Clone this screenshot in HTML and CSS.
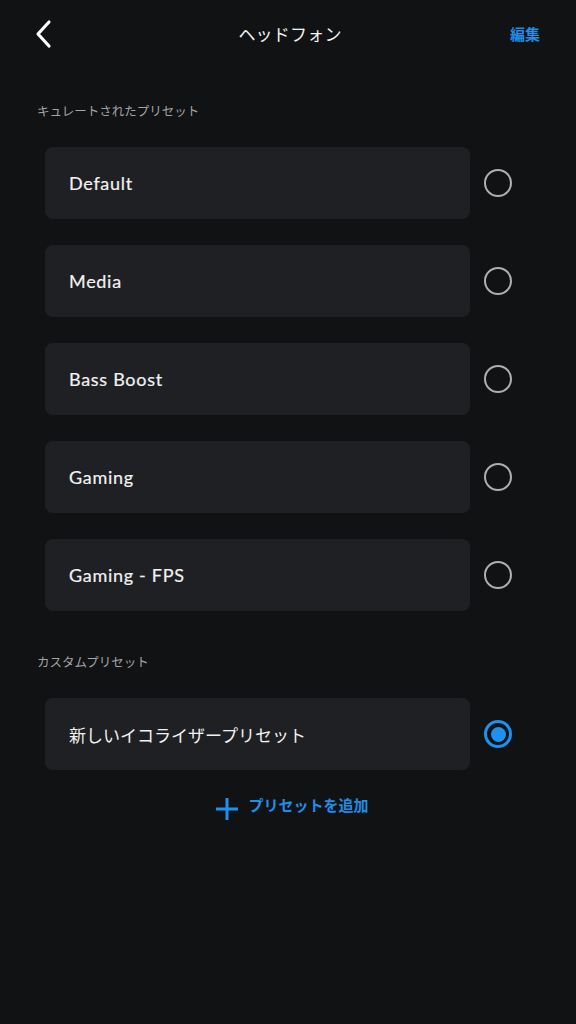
FILE: index.html
```html
<!DOCTYPE html>
<html lang="ja">
<head>
<meta charset="utf-8">
<link rel="stylesheet" href="styles.css">
</head>
<body>
<div class="screen">
  <header class="topbar">
    <button class="back" aria-label="戻る">
      <svg width="20" height="30" viewBox="0 0 20 30"><path d="M15 3 L4 15 L15 27" fill="none" stroke="#fff" stroke-width="3.2" stroke-linecap="round" stroke-linejoin="round"/></svg>
    </button>
    <h1 class="title">ヘッドフォン</h1>
    <a class="edit">編集</a>
  </header>

  <section class="group">
    <div class="group-label">キュレートされたプリセット</div>
    <ul class="list">
      <li class="row"><div class="card">Default</div><span class="radio"></span></li>
      <li class="row"><div class="card">Media</div><span class="radio"></span></li>
      <li class="row"><div class="card">Bass Boost</div><span class="radio"></span></li>
      <li class="row"><div class="card">Gaming</div><span class="radio"></span></li>
      <li class="row"><div class="card">Gaming - FPS</div><span class="radio"></span></li>
    </ul>
  </section>

  <section class="group custom">
    <div class="group-label">カスタムプリセット</div>
    <ul class="list">
      <li class="row"><div class="card jp">新しいイコライザープリセット</div><span class="radio selected"></span></li>
    </ul>
  </section>

  <div class="add">
    <svg class="plus" width="24" height="24" viewBox="0 0 24 24"><path d="M12 1 V23 M1 12 H23" stroke="#1e90f0" stroke-width="3" fill="none"/></svg>
    <span class="add-text">プリセットを追加</span>
  </div>
</div>
</body>
</html>
```

FILE: styles.css
```css
* { box-sizing: border-box; }
html, body {
  margin: 0;
  padding: 0;
  background: #111214;
}
body {
  font-family: "Lato", "Noto Sans CJK JP", sans-serif;
  color: #f2f2f2;
}
.screen {
  width: 576px;
  min-height: 1024px;
}
.topbar {
  height: 68px;
  display: grid;
  grid-template-columns: 1fr auto 1fr;
  align-items: center;
  padding: 0 36px 0 34px;
}
.back {
  background: none;
  border: 0;
  padding: 0;
  margin: 0;
  width: 20px;
  height: 30px;
  display: flex;
  justify-self: start;
}
.title {
  margin: 0 0 2px 0;
  font-family: "Noto Sans CJK JP", sans-serif;
  font-weight: 400;
  font-size: 17px;
  color: #f4f4f4;
  letter-spacing: 0.2px;
  padding-left: 6px;
}
.edit {
  justify-self: end;
  font-family: "Noto Sans CJK JP", sans-serif;
  font-weight: 700;
  font-size: 15px;
  color: #1e8ee8;
  margin-bottom: 2px;
}
.group-label {
  font-family: "Noto Sans CJK JP", sans-serif;
  font-size: 12.5px;
  line-height: 16px;
  color: #a3a4a6;
  padding-left: 37px;
  margin-top: 35px;
}
.custom .group-label {
  margin-top: 43px;
}
.list {
  list-style: none;
  margin: 28px 0 0 0;
  padding: 0 0 0 45px;
  display: flex;
  flex-direction: column;
  gap: 26px;
}
.row {
  display: flex;
  align-items: center;
  gap: 14px;
}
.card {
  width: 425px;
  height: 72px;
  background: #1f2023;
  border-radius: 8px;
  display: flex;
  align-items: center;
  padding-left: 24px;
  font-size: 18px;
  font-weight: 400;
  color: #f2f2f2;
  letter-spacing: 0.7px;
  -webkit-text-stroke: 0.2px #f2f2f2;
}
.card.jp {
  font-family: "Noto Sans CJK JP", sans-serif;
  font-size: 17px;
  letter-spacing: 0;
  -webkit-text-stroke: 0;
}
.radio {
  width: 28px;
  height: 28px;
  border-radius: 50%;
  border: 2.5px solid #aeafb1;
  flex: none;
  display: flex;
  align-items: center;
  justify-content: center;
}
.radio.selected {
  border: 3px solid #1e90f0;
}
.radio.selected::after {
  content: "";
  width: 15px;
  height: 15px;
  border-radius: 50%;
  background: #1e90f0;
}
.add {
  margin-top: 18px;
  display: flex;
  justify-content: center;
  align-items: center;
  gap: 9px;
  padding-left: 8px;
}
.plus {
  margin-top: 9px;
}
.add-text {
  font-family: "Noto Sans CJK JP", sans-serif;
  font-weight: 700;
  font-size: 15px;
  line-height: 20px;
  color: #1e8ee8;
}
```
